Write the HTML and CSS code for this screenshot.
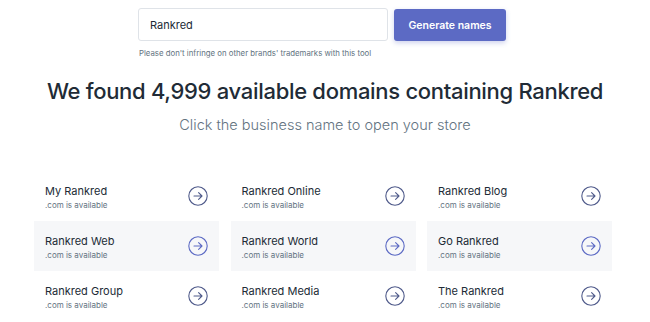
FILE: index.html
```html
<!DOCTYPE html>
<html lang="en">
<head>
  <meta charset="UTF-8">
  <title>Business Name Generator - Rankred</title>
  <link rel="stylesheet" href="styles.css">
</head>
<body>
  <div class="search">
    <div class="search-row">
      <div class="search-input">Rankred</div>
      <button class="search-btn">Generate names</button>
    </div>
    <p class="search-note">Please don't infringe on other brands' trademarks with this tool</p>
  </div>

  <h1 class="results-title">We found 4,999 available domains containing Rankred</h1>
  <p class="results-sub">Click the business name to open your store</p>

  <div class="name-grid">
    <a class="name-card">
      <div><div class="name">My Rankred</div><div class="avail">.com is available</div></div>
      <span class="go"><svg viewBox="0 0 20 20"><circle cx="10" cy="10" r="9.2"/><path d="M6 10h8M10.6 6.6 14 10l-3.4 3.4"/></svg></span>
    </a>
    <a class="name-card">
      <div><div class="name">Rankred Online</div><div class="avail">.com is available</div></div>
      <span class="go"><svg viewBox="0 0 20 20"><circle cx="10" cy="10" r="9.2"/><path d="M6 10h8M10.6 6.6 14 10l-3.4 3.4"/></svg></span>
    </a>
    <a class="name-card">
      <div><div class="name">Rankred Blog</div><div class="avail">.com is available</div></div>
      <span class="go"><svg viewBox="0 0 20 20"><circle cx="10" cy="10" r="9.2"/><path d="M6 10h8M10.6 6.6 14 10l-3.4 3.4"/></svg></span>
    </a>
    <a class="name-card shaded">
      <div><div class="name">Rankred Web</div><div class="avail">.com is available</div></div>
      <span class="go"><svg viewBox="0 0 20 20"><circle cx="10" cy="10" r="9.2"/><path d="M6 10h8M10.6 6.6 14 10l-3.4 3.4"/></svg></span>
    </a>
    <a class="name-card shaded">
      <div><div class="name">Rankred World</div><div class="avail">.com is available</div></div>
      <span class="go"><svg viewBox="0 0 20 20"><circle cx="10" cy="10" r="9.2"/><path d="M6 10h8M10.6 6.6 14 10l-3.4 3.4"/></svg></span>
    </a>
    <a class="name-card shaded">
      <div><div class="name">Go Rankred</div><div class="avail">.com is available</div></div>
      <span class="go"><svg viewBox="0 0 20 20"><circle cx="10" cy="10" r="9.2"/><path d="M6 10h8M10.6 6.6 14 10l-3.4 3.4"/></svg></span>
    </a>
    <a class="name-card">
      <div><div class="name">Rankred Group</div><div class="avail">.com is available</div></div>
      <span class="go"><svg viewBox="0 0 20 20"><circle cx="10" cy="10" r="9.2"/><path d="M6 10h8M10.6 6.6 14 10l-3.4 3.4"/></svg></span>
    </a>
    <a class="name-card">
      <div><div class="name">Rankred Media</div><div class="avail">.com is available</div></div>
      <span class="go"><svg viewBox="0 0 20 20"><circle cx="10" cy="10" r="9.2"/><path d="M6 10h8M10.6 6.6 14 10l-3.4 3.4"/></svg></span>
    </a>
    <a class="name-card">
      <div><div class="name">The Rankred</div><div class="avail">.com is available</div></div>
      <span class="go"><svg viewBox="0 0 20 20"><circle cx="10" cy="10" r="9.2"/><path d="M6 10h8M10.6 6.6 14 10l-3.4 3.4"/></svg></span>
    </a>
  </div>
</body>
</html>
```

FILE: styles.css
```css
html, body {
  margin: 0;
  padding: 0;
  overflow: hidden;
}
body {
  width: 650px;
  height: 322px;
  background: #fff;
  font-family: 'Inter', 'Noto Sans', Arial, sans-serif;
  color: #212b36;
}

/* --- search bar --- */
.search {
  padding: 8px 0 0 138px;
}
.search-row {
  display: flex;
  gap: 6px;
}
.search-input {
  box-sizing: border-box;
  width: 250px;
  height: 33px;
  border: 1px solid #dfe3e8;
  border-radius: 3px;
  padding: 0 11px;
  display: flex;
  align-items: center;
  font-size: 11px;
  color: #212b36;
}
.search-btn {
  box-sizing: border-box;
  width: 112px;
  height: 32px;
  margin-top: 1px;
  border: none;
  border-radius: 3px;
  background: #5c6ac4;
  color: #fff;
  font-family: inherit;
  font-size: 10.5px;
  font-weight: 600;
  box-shadow: 0 2px 5px rgba(92, 106, 196, 0.3);
}
.search-note {
  margin: 7px 0 0 1px;
  font-size: 7.8px;
  color: #637381;
}

/* --- headline --- */
.results-title {
  margin: 20px 0 0;
  text-align: center;
  font-size: 22px;
  font-weight: 500;
  letter-spacing: -0.3px;
  color: #212b36;
}
.results-sub {
  margin: 12px 0 0;
  text-align: center;
  font-size: 14.5px;
  font-weight: 300;
  color: #637381;
}

/* --- results grid --- */
.name-grid {
  margin: 38px 0 0 34px;
  display: grid;
  grid-template-columns: repeat(3, 185px);
  grid-auto-rows: 50px;
  column-gap: 11.5px;
}
.name-card {
  display: flex;
  align-items: center;
  justify-content: space-between;
  padding: 2px 11px 0 11px;
  text-decoration: none;
}
.name-card.shaded {
  background: #f6f7f9;
}
.name {
  font-size: 11px;
  color: #212b36;
  line-height: 14px;
}
.avail {
  font-size: 8px;
  color: #637381;
  margin-top: 2px;
}
.go {
  width: 20px;
  height: 20px;
  margin-top: -2px;
}
.go svg {
  width: 20px;
  height: 20px;
  fill: none;
  stroke: #4f5a8a;
  stroke-width: 1.1;
  stroke-linecap: round;
  stroke-linejoin: round;
}
.shaded .go svg {
  stroke: #5c6ac4;
}
```
